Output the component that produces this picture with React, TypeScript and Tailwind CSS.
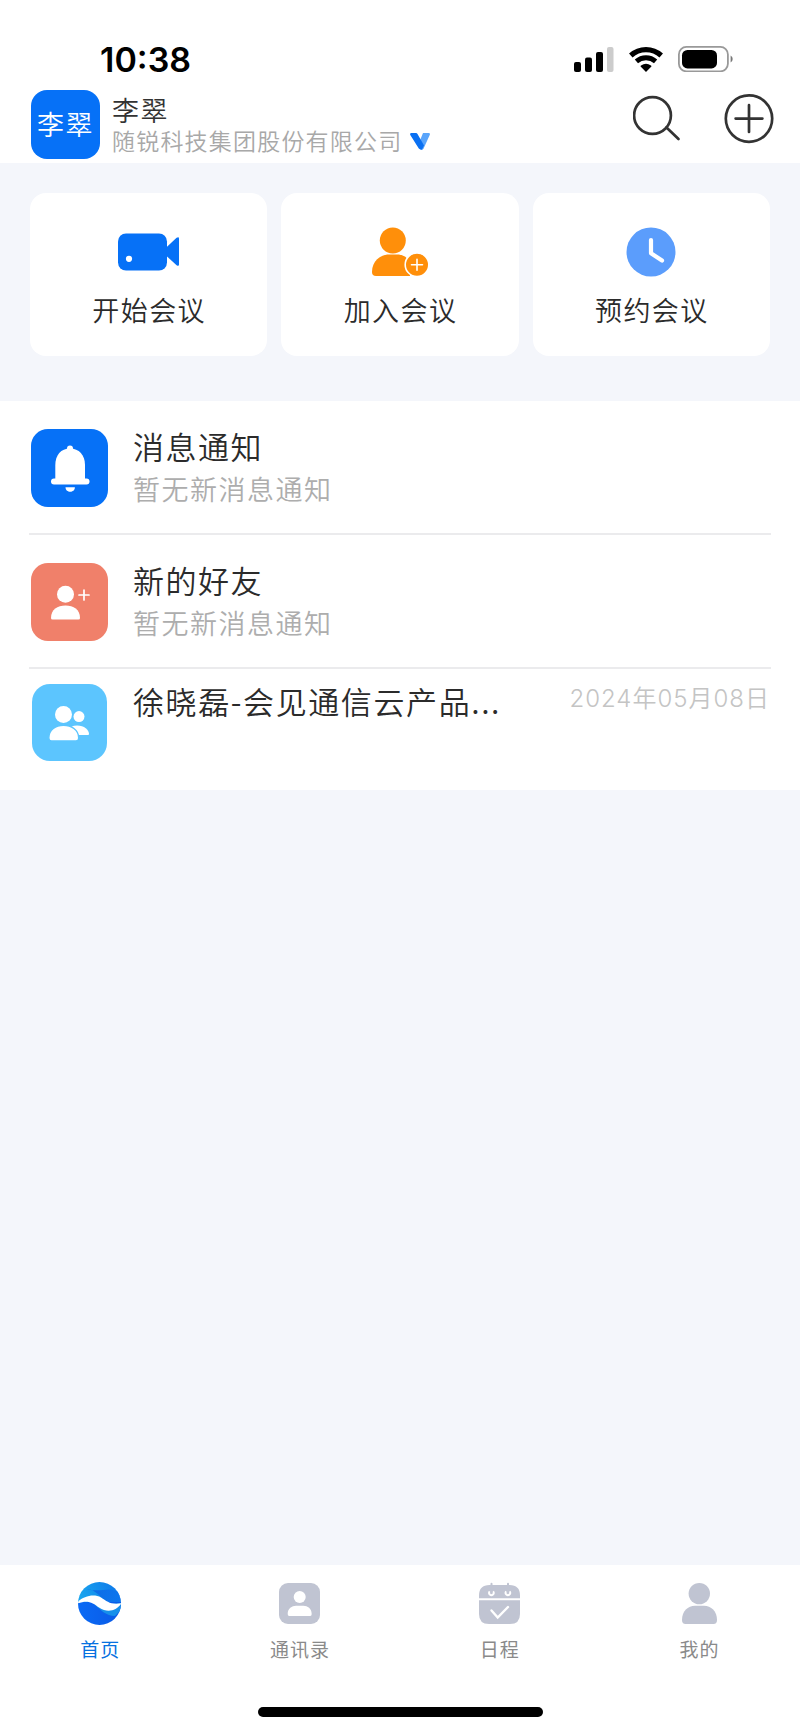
import type { ReactNode } from 'react';
import clsx from 'clsx';

function SignalIcon() {
  return (
    <svg className="w-10 h-[26px]" viewBox="0 0 40 26">
      <rect x="0" y="16" width="7" height="10" rx="2" />
      <rect x="11" y="11.5" width="7" height="14.5" rx="2" />
      <rect x="22" y="6" width="7" height="20" rx="2" />
      <rect fill="#cccccc" x="33" y="1" width="6.5" height="25" rx="2" />
    </svg>
  );
}

function WifiIcon() {
  return (
    <svg className="w-[34px] h-[26px]" viewBox="0 0 34 26">
      <g fill="none" stroke="#000">
        <path d="M1.8 9.5A22.4 22.4 0 0 1 32.2 9.5" strokeWidth="5.2" />
        <path d="M7.4 15.4A14.4 14.4 0 0 1 26.6 15.4" strokeWidth="4.8" />
      </g>
      <path d="M17 26 11.6 20.6Q11.3 20 12 19.6A8.2 8.2 0 0 1 22 19.6Q22.7 20 22.4 20.6Z" />
    </svg>
  );
}

function BatteryIcon() {
  return (
    <svg className="w-14 h-[26px]" viewBox="0 0 56 26">
      <rect fill="none" height="24.4" rx="7.5" stroke="#999" strokeWidth="1.8" width="49" x="0.9" y="0.9" />
      <rect height="18.4" rx="5.5" width="35" x="4" y="4" />
      <path d="M52.6 9.6a3.8 3.8 0 0 1 0 6.8z" fill="#777" />
    </svg>
  );
}

function SearchIcon() {
  return (
    <svg className="w-12 h-12" fill="none" stroke="#333" strokeLinecap="round" strokeWidth="2.7" viewBox="0 0 48 48">
      <circle cx="19.5" cy="21.5" r="18.4" />
      <path d="M33.5 33.5 45.5 45" />
    </svg>
  );
}

function PlusCircleIcon() {
  return (
    <svg className="w-[50px] h-[50px]" fill="none" stroke="#333" strokeLinecap="round" strokeWidth="2.7" viewBox="0 0 50 50">
      <circle cx="25" cy="24.6" r="23.2" />
      <path d="M11.6 24.6h26.8M25 11.2v26.8" />
    </svg>
  );
}

function VerifiedMark() {
  return (
    <svg className="mt-[2px] w-5 h-[17px]" viewBox="0 0 20 17">
      <path d="M13 0h5.6q1.9.2 1.1 2L13.6 15.5q-1 1.500-2.500 1.500L9 10z" fill="#5aa5fb" />
      <path d="M1.4 0H6q1 .1 1.500 1l4 7 2.500 4.500-1.800 3.500q-1.400 1.500-3.400-.5L.3 2Q-.4.2 1.400 0z" fill="#0a70f2" />
    </svg>
  );
}

function CameraIcon() {
  return (
    <svg className="w-[61px] h-[50px]" fill="#0671f7" viewBox="0 0 61 50">
      <rect height="37" rx="8" width="49" x="0" y="6.5" />
      <path d="M48.5 20.2 58.600 10.700q2.400-1.400 2.400.8v26q0 2.200-2.400.8L48.500 29z" />
      <circle cx="11" cy="31.8" fill="#fff" r="3.1" />
    </svg>
  );
}

function JoinIcon() {
  return (
    <svg className="w-14 h-[50px]" fill="#ff8f0a" viewBox="0 0 56 50">
      <circle cx="20.8" cy="13.5" r="13" />
      <path d="M0 45C0 34 8 27.500 17 27.500h8c5 0 9 2 11 5l2 16.500H4q-4 0-4-4z" />
      <circle cx="45" cy="37.7" r="11.8" stroke="#fff" strokeWidth="1.6" />
      <path d="M39.5 37.7h11M45 32.2v11" stroke="#fff" strokeLinecap="round" strokeWidth="1.6" />
    </svg>
  );
}

function ClockIcon() {
  return (
    <svg className="w-[50px] h-[50px]" viewBox="0 0 50 50">
      <circle cx="25" cy="25" fill="#5b9dfc" r="24.5" />
      <path d="M25 13v13.2L36 33.6" fill="none" stroke="#fff" strokeLinecap="round" strokeLinejoin="round" strokeWidth="4.2" />
    </svg>
  );
}

function BellIcon() {
  return (
    <svg className="w-[77px] h-[77px]" fill="#fff" viewBox="0 0 77 77">
      <circle cx="39" cy="19.5" r="3" />
      <path d="M24.3 51V36C24.3 26 30 19.500 39 19.500S54 26 54 36v15z" />
      <rect height="6" rx="3" width="38.5" x="20" y="49.5" />
      <path d="M34.5 58.3h9.4c0 6-9.4 6-9.4 0z" />
    </svg>
  );
}

function AddFriendIcon() {
  return (
    <svg className="w-[77px] h-[77px]" fill="#fff" viewBox="0 0 77 77">
      <circle cx="34.5" cy="31.3" r="8.5" />
      <path d="M20 55C20 46.500 26.500 42.500 34.500 42.500S49 46.500 49 55q0 1.500-1.500 1.500h-26q-1.500 0-1.500-1.500z" />
      <path d="M48 32h10M53 27v10" stroke="#fff" strokeLinecap="round" strokeWidth="1.7" />
    </svg>
  );
}

function GroupIcon() {
  return (
    <svg className="w-[75px] h-[77px]" fill="#fff" viewBox="0 0 75 77">
      <circle cx="47" cy="32.6" r="5.5" />
      <path d="M39 42.500C49 39 57 44.500 57 50q0 1-1 1H44z" />
      <circle cx="31.5" cy="30.5" r="8.5" />
      <path
        d="M16.8 54C16.8 45.500 24 41.300 31.500 41.300S46.700 45.500 46.700 54q0 2.900-2.700 2.900H19.500q-2.700 0-2.700-2.900z"
        stroke="#5cc5fe"
        strokeWidth="1.4"
      />
    </svg>
  );
}

function HomeIcon() {
  return (
    <svg className="w-[43px] h-[43px]" viewBox="0 0 43 43">
      <defs>
        <linearGradient id="skyTop" x1="0" x2="1" y1="0.5" y2="0.3">
          <stop offset="0" stopColor="#1ba6ee" />
          <stop offset="1" stopColor="#0c76ea" />
        </linearGradient>
        <linearGradient id="skyShade" x1="0" x2="1">
          <stop offset="0" stopColor="#0a55e0" />
          <stop offset="1" stopColor="#0b74f0" />
        </linearGradient>
        <linearGradient id="sea" x1="0" x2="1">
          <stop offset="0" stopColor="#0a6af5" />
          <stop offset="1" stopColor="#0a5ae6" />
        </linearGradient>
        <clipPath id="disc">
          <circle cx="21.5" cy="21.5" r="21.5" />
        </clipPath>
      </defs>
      <g clipPath="url(#disc)">
        <path d="M0 0h43v22H0z" fill="url(#skyTop)" />
        <path d="M8 7c7 0 11 4 16 9s11 7 19 5V12Q36 6 25 8 15 9 8 7z" fill="url(#skyShade)" opacity="0.7" />
        <path d="M0 20h43v23H0z" fill="url(#sea)" />
        <path d="M17 23c6 5 11 11 20 11l6-6v-7z" fill="#1690ea" />
        <path
          d="M0 19.7C6 14 16 11.500 23 15.500 29 19.500 33 23 43 21.300V22C38 28.500 30 31.500 21 25.500 15 21 10 17.500 0 21.300z"
          fill="#fff"
        />
      </g>
    </svg>
  );
}

function ContactsIcon() {
  return (
    <svg className="w-[41px] h-[43px]" viewBox="0 0 41 43">
      <rect fill="#c0c4d2" height="41" rx="9" width="41" x="0" y="1" />
      <circle cx="20.7" cy="15" fill="#fff" r="6" />
      <path d="M8.7 32C8.7 26.500 13 23.800 17 23.800h7.500c4 0 8.200 2.700 8.200 8.200q0 2-1.500 2h-21q-1.500 0-1.500-2z" fill="#fff" />
    </svg>
  );
}

function CalendarIcon() {
  return (
    <svg className="w-[41px] h-[43px]" viewBox="0 0 41 43">
      <path d="M0 16.2v-2.700Q0 3 10.500 3h20Q41 3 41 13.500v2.700zM0 18.200h41V32q0 10-10 10H10Q0 42 0 32z" fill="#c0c4d2" />
      <path d="M12.5 1.8v8M29 1.8v8" stroke="#c0c4d2" strokeLinecap="round" strokeWidth="2" />
      <path d="M10.7 9.3a2.300 2.300 0 1 0 3.400 0M27.200 9.300a2.300 2.300 0 1 0 3.400 0" fill="none" stroke="#fff" strokeWidth="1.8" />
      <path d="m12.5 28.5 6.200 7L29 25" fill="none" stroke="#fff" strokeLinecap="round" strokeWidth="2.4" />
    </svg>
  );
}

function ProfileIcon() {
  return (
    <svg className="w-[35px] h-[43px]" fill="#c0c4d2" viewBox="0 0 35 43">
      <circle cx="17.3" cy="11.6" r="10.7" />
      <path d="M0 38C0 29 6 23.700 13 23.700h9c7 0 13 5.300 13 14.300q0 4-3.500 4h-28Q0 42 0 38z" />
    </svg>
  );
}

const ACTIONS = [
  { label: '开始会议', icon: <CameraIcon /> },
  { label: '加入会议', icon: <JoinIcon /> },
  { label: '预约会议', icon: <ClockIcon /> },
];

const TABS = [
  { label: '首页', icon: <HomeIcon />, active: true },
  { label: '通讯录', icon: <ContactsIcon />, active: false },
  { label: '日程', icon: <CalendarIcon />, active: false },
  { label: '我的', icon: <ProfileIcon />, active: false },
];

interface NoticeRowProps {
  icon: ReactNode;
  tile: string;
  title: string;
  subtitle: string;
}

function NoticeRow({ icon, tile, title, subtitle }: NoticeRowProps) {
  return (
    <div className="ml-[29px] mr-[29px] h-[134px] pl-0.5 pt-7 flex gap-[25px] border-b-2 border-[#ebebed]">
      <div className={clsx('w-[77px] h-[78px] rounded-[17px] shrink-0', tile)}>{icon}</div>
      <div className="-mt-px flex flex-col">
        <span className="text-[31px] leading-[36px] tracking-[1.5px] text-[#2b2b2b]">{title}</span>
        <span className="mt-[7px] text-[27px] leading-[36px] tracking-[1.5px] text-[#adadad]">{subtitle}</span>
      </div>
    </div>
  );
}

export default function App() {
  return (
    <div className="w-[800px] h-[1734px] flex flex-col overflow-hidden bg-[#f4f6fb] font-[350] font-['Noto_Sans_CJK_SC',sans-serif]">
      <header className="h-[163px] bg-white shrink-0">
        <div className="h-[89px] pt-[46px] pl-[100px] pr-[66px] flex items-start justify-between">
          <span className="mt-px font-['Inter',sans-serif] text-[34px] leading-[26px] font-semibold text-black">10:38</span>
          <div className="flex">
            <SignalIcon />
            <div className="ml-[15px]">
              <WifiIcon />
            </div>
            <div className="ml-[15px]">
              <BatteryIcon />
            </div>
          </div>
        </div>
        <div className="pl-[31px] pr-[26px] pt-px flex items-start">
          <div className="w-[69px] h-[69px] rounded-[16px] bg-[#0671f7] pb-px flex items-center justify-center text-[27px] leading-[40px] tracking-[1.5px] text-white">
            李翠
          </div>
          <div className="ml-3 flex flex-col flex-1">
            <span className="mt-[2px] text-[27px] leading-[36px] tracking-[1.5px] text-[#333]">李翠</span>
            <div className="-mt-[2px] flex items-center gap-[8px]">
              <span className="text-[23px] leading-[28px] tracking-[1.2px] text-[#a8a8a8]">随锐科技集团股份有限公司</span>
              <VerifiedMark />
            </div>
          </div>
          <div className="mt-[4px] flex gap-[43px]">
            <SearchIcon />
            <PlusCircleIcon />
          </div>
        </div>
      </header>

      {/* Quick meeting actions */}
      <section className="h-[238px] shrink-0 pt-[30px] px-[30px] grid grid-cols-3 gap-[14px] items-start">
        {ACTIONS.map((action) => (
          <div key={action.label} className="h-[163px] rounded-[16px] bg-white pt-[34px] flex flex-col items-center">
            {action.icon}
            <span className="mt-[13px] pl-px text-[27px] leading-[40px] tracking-[1.4px] text-[#2b2b2b]">{action.label}</span>
          </div>
        ))}
      </section>

      <main className="h-[389px] shrink-0 bg-white">
        <NoticeRow icon={<BellIcon />} subtitle="暂无新消息通知" tile="bg-[#0671f7]" title="消息通知" />
        <NoticeRow icon={<AddFriendIcon />} subtitle="暂无新消息通知" tile="bg-[#f0806a]" title="新的好友" />
        <div className="pl-8 pr-[30px] pt-[15px] flex items-start">
          <div className="w-[75px] h-[77px] rounded-[18px] bg-[#5cc5fe] shrink-0">
            <GroupIcon />
          </div>
          <span className="-mt-px ml-[26px] text-[31px] leading-[36px] tracking-[1.6px] text-[#2b2b2b]">徐晓磊-会见通信云产品...</span>
          <span className="mt-px ml-auto text-[24px] leading-[28px] tracking-[1px] text-[#c4c4c4] whitespace-nowrap font-['Inter','Noto_Sans_CJK_SC',sans-serif]">
            2024年05月08日
          </span>
        </div>
      </main>

      <nav className="mt-auto h-[169px] shrink-0 bg-white flex flex-col items-center">
        <div className="w-full h-[142px] pt-[17px] pr-px grid grid-cols-4">
          {TABS.map((tab) => (
            <div
              key={tab.label}
              className={clsx(
                'flex flex-col items-center text-[19px] leading-[28px] tracking-[1px] font-normal',
                tab.active ? 'text-[#0671e0]' : 'text-[#8a8a8a]',
              )}
            >
              {tab.icon}
              <span className="mt-[10px] pl-px">{tab.label}</span>
            </div>
          ))}
        </div>
        <div className="w-[285px] h-[10px] rounded-full bg-black" />
      </nav>
    </div>
  );
}
